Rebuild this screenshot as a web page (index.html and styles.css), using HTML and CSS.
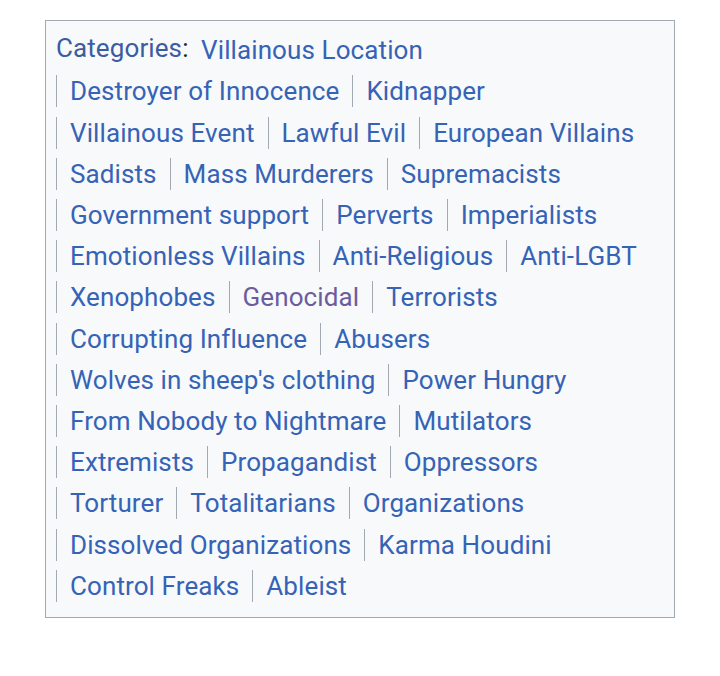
FILE: index.html
```html
<!DOCTYPE html>
<html>
<head>
<meta charset="utf-8">
<link rel="stylesheet" href="styles.css">
</head>
<body>
<div class="catlinks">
  <a class="cat-label" href="#">Categories</a>:
  <ul class="cat-list"><li><a href="#">Villainous Location</a></li><li><a href="#">Destroyer of Innocence</a></li><li><a href="#">Kidnapper</a></li><li><a href="#">Villainous Event</a></li><li><a href="#">Lawful Evil</a></li><li><a href="#">European Villains</a></li><li><a href="#">Sadists</a></li><li><a href="#">Mass Murderers</a></li><li><a href="#">Supremacists</a></li><li><a href="#">Government support</a></li><li><a href="#">Perverts</a></li><li><a href="#">Imperialists</a></li><li><a href="#">Emotionless Villains</a></li><li><a href="#">Anti-Religious</a></li><li><a href="#">Anti-LGBT</a></li><li><a href="#">Xenophobes</a></li><li><a class="visited" href="#">Genocidal</a></li><li><a href="#">Terrorists</a></li><li><a href="#">Corrupting Influence</a></li><li><a href="#">Abusers</a></li><li><a href="#">Wolves in sheep's clothing</a></li><li><a href="#">Power Hungry</a></li><li><a href="#">From Nobody to Nightmare</a></li><li><a href="#">Mutilators</a></li><li><a href="#">Extremists</a></li><li><a href="#">Propagandist</a></li><li><a href="#">Oppressors</a></li><li><a href="#">Torturer</a></li><li><a href="#">Totalitarians</a></li><li><a href="#">Organizations</a></li><li><a href="#">Dissolved Organizations</a></li><li><a href="#">Karma Houdini</a></li><li><a href="#">Control Freaks</a></li><li><a href="#">Ableist</a></li></ul>
</div>
</body>
</html>
```
FILE: styles.css
```css
html, body {
  margin: 0;
  padding: 0;
  background: #ffffff;
}
body {
  padding: 20px 0 0 45px;
  font-family: Roboto, "Liberation Sans", sans-serif;
}
.catlinks {
  width: 608px;
  border: 1px solid #a2a9b1;
  background: #f8f9fa;
  padding: 7px 10px 12px 10px;
  font-size: 26px;
  letter-spacing: 0.1px;
  line-height: 41.2px;
  color: #202122;
}
.catlinks a {
  color: #3563b6;
  text-decoration: none;
}
.catlinks a.cat-label {
  color: #3c5ca0;
}
.catlinks a.visited {
  color: #6c5c9e;
}
.cat-list {
  display: inline;
  margin: 0;
  padding: 0;
  list-style: none;
}
.cat-list li {
  display: inline-block;
  line-height: 32px;
  margin: 0;
  padding: 0 13px 0 13px;
  border-left: 1px solid #a2a9b1;
  vertical-align: middle;
}
.cat-list li:first-child {
  border-left: none;
  padding-left: 6px;
}
```
